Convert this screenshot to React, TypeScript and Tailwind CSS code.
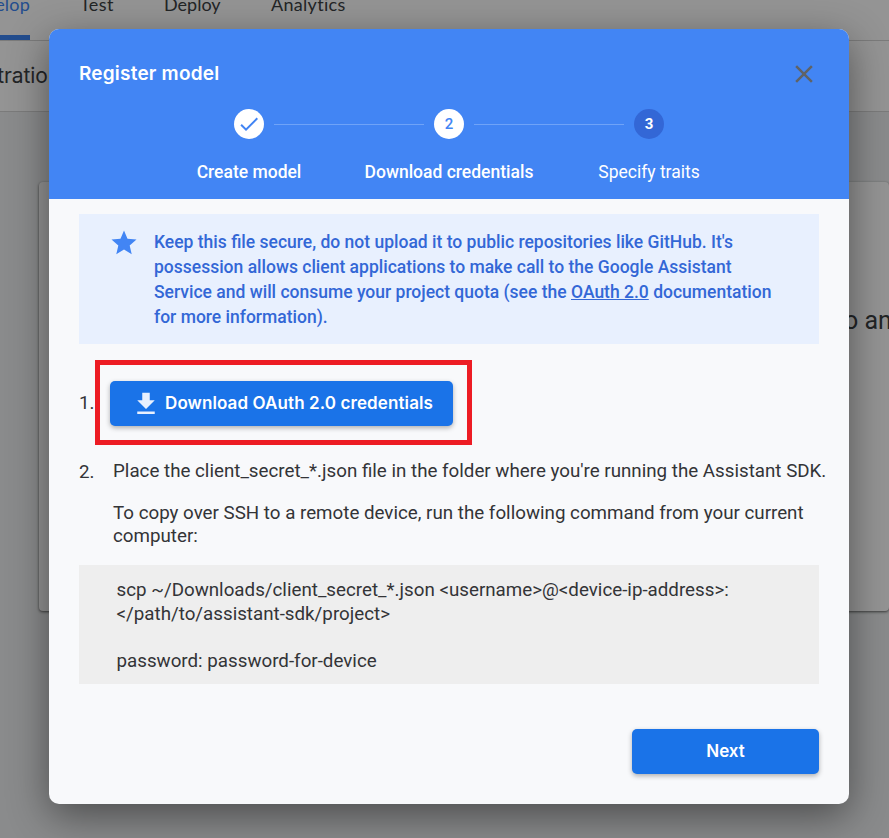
import { MdCheck, MdClose, MdFileDownload, MdStar } from "react-icons/md";

interface Step {
  label: string;
  state: "done" | "active" | "todo";
}

const steps: Step[] = [
  { label: "Create model", state: "done" },
  { label: "Download credentials", state: "active" },
  { label: "Specify traits", state: "todo" },
];

function ConsolePage() {
  return (
    <div className="h-full bg-[#eef0f1] font-['Lato',sans-serif] text-[#3c4043]">
      <nav className="flex h-[41px] border-b border-[#d5d5d5] bg-white text-[18px] leading-[22px]">
        <div className="flex h-[40px] w-[30px] justify-end border-b-[5px] border-[#3d86f5] whitespace-nowrap text-[#3d86f5]">
          <span className="-mt-[7px] tracking-[0.2px]">Develop</span>
        </div>
        <span className="-mt-[7px] ml-[50px] w-[84px] tracking-[0.4px]">Test</span>
        <span className="-mt-[7px] w-[107px]">Deploy</span>
        <span className="-mt-[7px] tracking-[0.3px]">Analytics</span>
      </nav>
      <div className="flex h-[71px] items-center border-b border-[#d5d5d5] bg-white">
        <div className="flex w-[60px] justify-end font-['Inter',sans-serif] text-[21px] tracking-[-0.1px] whitespace-nowrap">Device registration</div>
      </div>
      <div className="mt-[70px] ml-[39px] h-[429px] rounded-[4px] bg-white pt-[123px] shadow-[0_1px_3px_rgba(0,0,0,0.6)]">
        <div className="ml-[805px] w-[120px] font-['Roboto',sans-serif] text-[25px] leading-[32px] whitespace-nowrap">o any of</div>
      </div>
    </div>
  );
}

function StepItem({ step, index }: { step: Step; index: number }) {
  return (
    <li className="flex w-[200px] flex-col items-center">
      <span
        className={
          step.state === "todo"
            ? "flex size-[30px] items-center justify-center rounded-full bg-[#3367d6] text-[15px] font-bold text-white"
            : "flex size-[30px] items-center justify-center rounded-full bg-white text-[15px] font-medium text-[#4285f4]"
        }
      >
        {step.state === "done" ? <MdCheck className="size-[24px]" /> : index + 1}
      </span>
      <span
        className={
          step.state === "todo"
            ? "mt-[21px] text-[17.5px] leading-[24px] text-white"
            : "mt-[21px] text-[17.5px] leading-[24px] font-medium text-white"
        }
      >
        {step.label}
      </span>
    </li>
  );
}

function Stepper() {
  return (
    <div className="relative mx-auto w-[600px]">
      <ol className="flex">
        {steps.map((step, i) => (
          <StepItem key={step.label} step={step} index={i} />
        ))}
      </ol>
      <div className="absolute top-[15px] left-[125px] h-px w-[150px] bg-[#6fa3f8]" />
      <div className="absolute top-[15px] left-[325px] h-px w-[150px] bg-[#6fa3f8]" />
    </div>
  );
}

export default function App() {
  return (
    <div className="relative h-[838px] w-[889px] overflow-hidden">
      <ConsolePage />
      <div className="absolute inset-0 bg-black/42 pt-[29px] pl-[49px]">
        <div
          role="dialog"
          className="flex h-[775px] w-[800px] flex-col overflow-hidden rounded-[10px] bg-[#f8f9fb] font-['Roboto',sans-serif] text-[#333437] shadow-[0_12px_40px_rgba(0,0,0,0.45)]"
        >
          <header className="h-[170px] bg-[#4285f4]">
            <div className="flex h-[80px] items-start justify-between pr-[30px] pl-[30px]">
              <h2 className="mt-[31px] font-['Inter',sans-serif] text-[19px] leading-[28px] font-semibold tracking-[0.2px] text-white">
                Register model
              </h2>
              <button className="mt-[30px] text-[#5f6368]">
                <MdClose className="size-[30px]" />
              </button>
            </div>
            <Stepper />
          </header>

          <main className="flex flex-1 flex-col px-[30px] pt-[15px] text-[18.75px]">
            <section className="flex h-[130px] bg-[#e8f0fe] pt-[14px] pl-[30px] text-[17.5px] leading-[25px] font-medium text-[#3367d6]">
              <MdStar className="size-[30px] text-[#4285f4]" />
              <p className="mt-[2px] ml-[15px] whitespace-nowrap">
                Keep this file secure, do not upload it to public repositories like GitHub. It's
                <br />
                possession allows client applications to make call to the Google Assistant
                <br />
                Service and will consume your project quota (see the{" "}
                <a className="underline" href="#oauth">OAuth 2.0</a> documentation
                <br />
                for more information).
              </p>
            </section>

            <div className="relative mt-[37px] flex h-[45px]">
              <span className="mt-[10px] w-[31px] leading-[24px]">1.</span>
              <button className="flex w-[343px] items-center rounded-[5px] bg-[#1a73e8] pl-[20.5px] font-['Inter',sans-serif] text-[17px] font-semibold tracking-[0.1px] whitespace-nowrap text-white shadow-[0_2px_5px_rgba(0,0,0,0.3)]">
                <MdFileDownload className="mt-px mr-[4.5px] size-[30px] text-[#e8f0fe]" />
                Download OAuth 2.0 credentials
              </button>
              <div className="absolute -top-[21px] left-[16px] h-[85px] w-[377px] border-[5px] border-[#ed1c24]" />
            </div>

            <div className="mt-[33px] flex leading-[24px] whitespace-nowrap">
              <span className="mt-px w-[34px] shrink-0">2.</span>
              <div>
                <p>Place the client_secret_*.json file in the folder where you're running the Assistant SDK.</p>
                <p className="mt-[19px] leading-[23.4px]">
                  To copy over SSH to a remote device, run the following command from your current
                  <br />
                  computer:
                </p>
              </div>
            </div>

            <pre className="mt-[16px] h-[119px] bg-[#eeeeee] pt-[14px] pl-[37.5px] font-['Roboto',sans-serif] leading-[23.7px]">
              {"scp ~/Downloads/client_secret_*.json <username>@<device-ip-address>:\n</path/to/assistant-sdk/project>\n\npassword: password-for-device"}
            </pre>

            <button className="mt-[45px] ml-auto h-[45px] w-[187px] rounded-[5px] bg-[#1a73e8] font-['Inter',sans-serif] text-[17px] font-semibold text-white shadow-[0_2px_5px_rgba(0,0,0,0.3)]">
              Next
            </button>
          </main>
        </div>
      </div>
    </div>
  );
}
